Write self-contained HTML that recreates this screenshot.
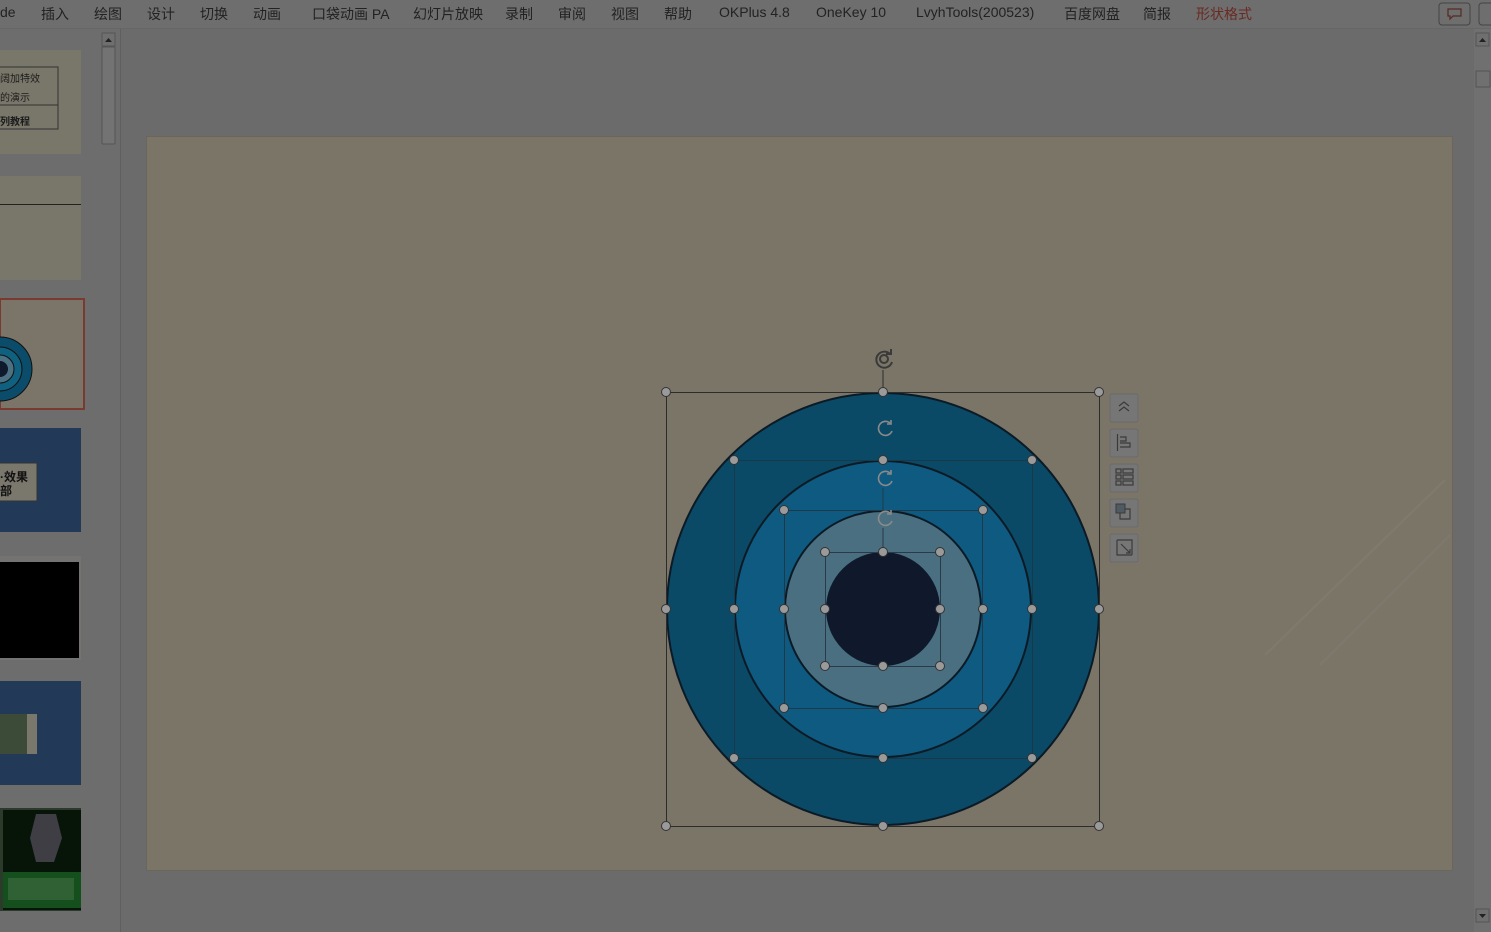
<!DOCTYPE html>
<html><head><meta charset="utf-8"><style>
html,body{margin:0;padding:0;width:1491px;height:932px;overflow:hidden;background:#6b6b6b;font-family:"Liberation Sans","Noto Sans CJK SC",sans-serif}
.menu{position:absolute;left:0;top:0;width:1491px;height:28px;background:#6e6e6e;border-bottom:1px solid #666}
.menu span{position:absolute;top:4px;font-size:14px;color:#222;white-space:nowrap}
</style></head><body>
<div class="menu">
<span style="left:0">de</span>
<span style="left:41px">插入</span>
<span style="left:94px">绘图</span>
<span style="left:147px">设计</span>
<span style="left:200px">切换</span>
<span style="left:253px">动画</span>
<span style="left:312px">口袋动画 PA</span>
<span style="left:413px">幻灯片放映</span>
<span style="left:505px">录制</span>
<span style="left:558px">审阅</span>
<span style="left:611px">视图</span>
<span style="left:664px">帮助</span>
<span style="left:719px">OKPlus 4.8</span>
<span style="left:816px">OneKey 10</span>
<span style="left:916px">LvyhTools(200523)</span>
<span style="left:1064px">百度网盘</span>
<span style="left:1143px">简报</span>
<span style="left:1196px;color:#6a2a22">形状格式</span>
</div>
<svg width="1491" height="932" style="position:absolute;left:0;top:0" xmlns="http://www.w3.org/2000/svg">
<rect x="1439" y="3" width="31" height="22" rx="3" fill="none" stroke="#444"/>
<path d="M1448 9h13v7h-8l-3 3v-3h-2z" fill="none" stroke="#552a22" stroke-width="1.2"/>
<rect x="1479" y="3" width="20" height="22" rx="3" fill="none" stroke="#444"/>
<rect x="0" y="29" width="120" height="903" fill="#6d6d6d"/>
<line x1="120.5" y1="29" x2="120.5" y2="932" stroke="#5f5f5f"/>
<rect x="102" y="33" width="13" height="13" fill="#6f6f6f" stroke="#555"/>
<path d="M105 42l3.5-4 3.5 4z" fill="#222"/>
<rect x="102" y="47" width="13" height="97" rx="1" fill="#737373" stroke="#555"/>
<rect x="0" y="50" width="81" height="104" fill="#79766a"/>
<rect x="-2" y="67" width="60" height="62" fill="none" stroke="#333"/>
<line x1="0" y1="105" x2="58" y2="105" stroke="#333"/>
<text x="0" y="82" font-size="10" fill="#1c1c1c">阔加特效</text>
<text x="0" y="101" font-size="10" fill="#1c1c1c">的演示</text>
<text x="0" y="125" font-size="10" font-weight="bold" fill="#1c1c1c">列教程</text>
<rect x="0" y="176" width="81" height="104" fill="#79766a"/>
<line x1="0" y1="204.5" x2="81" y2="204.5" stroke="#222"/>
<rect x="0" y="299" width="84" height="110" fill="#7a7568" stroke="#7a3a30" stroke-width="2"/>
<ellipse cx="0" cy="369" rx="32" ry="32" fill="#0b4c6a" stroke="#111"/>
<ellipse cx="0" cy="369" rx="22" ry="22" fill="#10607f" stroke="#111"/>
<ellipse cx="0" cy="369" rx="14" ry="14" fill="#4c7182" stroke="#111"/>
<ellipse cx="0" cy="369" rx="8" ry="8" fill="#0f1a2c"/>
<rect x="0" y="428" width="81" height="104" fill="#233958"/>
<rect x="-2" y="463" width="39" height="38" fill="#7a776d" stroke="#333"/>
<text x="0" y="481" font-size="12" font-weight="bold" fill="#111">·效果</text>
<text x="0" y="495" font-size="12" font-weight="bold" fill="#111">部</text>
<rect x="0" y="556" width="81" height="104" fill="#757372"/>
<rect x="0" y="562" width="79" height="96" fill="#000"/>
<rect x="0" y="681" width="81" height="104" fill="#233958"/>
<rect x="0" y="714" width="37" height="40" fill="#7a776d"/>
<rect x="0" y="714" width="27" height="40" fill="#3c4a38"/>
<rect x="0" y="808" width="81" height="103" fill="#2b3a2a"/>
<rect x="3" y="810" width="78" height="100" fill="#071509"/>
<path d="M36 814h20l6 24-8 24h-18l-6-24z" fill="#3e3e44"/>
<rect x="3" y="872" width="78" height="36" fill="#164f1e"/>
<rect x="8" y="878" width="66" height="22" fill="#3a6a3e" opacity=".7"/>
<rect x="1474" y="29" width="17" height="903" fill="#707070"/>
<rect x="1476" y="33" width="13" height="13" fill="#6f6f6f" stroke="#555"/>
<path d="M1479 42l3.5-4 3.5 4z" fill="#222"/>
<rect x="1476" y="71" width="14" height="16" fill="none" stroke="#555"/>
<rect x="1476" y="909" width="13" height="13" fill="#6f6f6f" stroke="#555"/>
<path d="M1479 914l3.5 4 3.5-4z" fill="#222"/>
<rect x="146.5" y="136.5" width="1306" height="734" fill="#7b7567" stroke="#6a665b"/>
<line x1="1265" y1="655" x2="1445" y2="480" stroke="#807a6e" stroke-width="2"/>
<line x1="1320" y1="665" x2="1450" y2="535" stroke="#7f796d" stroke-width="2"/>
<circle cx="883" cy="609" r="216" fill="#0b4a66" stroke="#0c1a26" stroke-width="2"/>
<circle cx="883" cy="609" r="148" fill="#0f5a80" stroke="#0c1a26" stroke-width="2"/>
<circle cx="883" cy="609" r="98" fill="#4a6f80" stroke="#0c1a26" stroke-width="2"/>
<circle cx="883" cy="609" r="57" fill="#0f192b"/>
<g fill="none" stroke="#2c2c2c" stroke-width="1">
<rect x="666.5" y="392.5" width="433" height="434"/>
<rect x="734.5" y="460.5" width="298" height="298" stroke="#163a4a"/>
<rect x="784.5" y="510.5" width="198" height="198" stroke="#1e3a4a"/>
<rect x="825.5" y="552.5" width="115" height="114" stroke="#2a3a48"/>
<line x1="883" y1="370" x2="883" y2="392"/>
<line x1="883" y1="488" x2="883" y2="510" stroke="#1e3a4a"/>
<line x1="883" y1="528" x2="883" y2="552" stroke="#2a3a48"/>
</g>
<g fill="#9a9a9a" stroke="#333" stroke-width="1">
<circle cx="666" cy="392" r="4.5"/><circle cx="883" cy="392" r="4.5"/><circle cx="1099" cy="392" r="4.5"/>
<circle cx="666" cy="609" r="4.5"/><circle cx="1099" cy="609" r="4.5"/>
<circle cx="666" cy="826" r="4.5"/><circle cx="883" cy="826" r="4.5"/><circle cx="1099" cy="826" r="4.5"/>
<circle cx="734" cy="460" r="4.5"/><circle cx="883" cy="460" r="4.5"/><circle cx="1032" cy="460" r="4.5"/>
<circle cx="734" cy="609" r="4.5"/><circle cx="1032" cy="609" r="4.5"/>
<circle cx="734" cy="758" r="4.5"/><circle cx="883" cy="758" r="4.5"/><circle cx="1032" cy="758" r="4.5"/>
<circle cx="784" cy="510" r="4.5"/><circle cx="983" cy="510" r="4.5"/>
<circle cx="784" cy="609" r="4.5"/><circle cx="983" cy="609" r="4.5"/>
<circle cx="784" cy="708" r="4.5"/><circle cx="883" cy="708" r="4.5"/><circle cx="983" cy="708" r="4.5"/>
<circle cx="825" cy="552" r="4.5"/><circle cx="883" cy="552" r="4.5"/><circle cx="940" cy="552" r="4.5"/>
<circle cx="825" cy="609" r="4.5"/><circle cx="940" cy="609" r="4.5"/>
<circle cx="825" cy="666" r="4.5"/><circle cx="883" cy="666" r="4.5"/><circle cx="940" cy="666" r="4.5"/>
</g>
<g fill="none" stroke="#3a3a3a" stroke-width="2">
<path d="M890 354a8 8 0 1 0 2 8"/><path d="M886 354h5v-5"/>
<circle cx="884" cy="359" r="4"/>
</g>
<g fill="none" stroke="#8a8a8a" stroke-width="1.6">
<path d="M890 423a7 7 0 1 0 2 8"/><path d="M887 424h4v-4"/>
<path d="M890 473a7 7 0 1 0 2 8"/><path d="M887 474h4v-4"/>
<path d="M890 513a7 7 0 1 0 2 8"/><path d="M887 514h4v-4"/>
</g>
<g fill="#767676" stroke="#6a6a6a">
<rect x="1110" y="394" width="28" height="28" rx="2"/>
<rect x="1110" y="429" width="28" height="28" rx="2"/>
<rect x="1110" y="464" width="28" height="28" rx="2"/>
<rect x="1110" y="499" width="28" height="28" rx="2"/>
<rect x="1110" y="534" width="28" height="28" rx="2"/>
</g>
<g fill="none" stroke="#3a3a3a" stroke-width="1.2">
<path d="M1119 406l5-4 5 4M1119 411l5-4 5 4"/>
<path d="M1117.5 434v17M1120 437h6v4h-6M1120 443h10v4h-10"/>
<rect x="1116" y="469" width="5" height="4"/><rect x="1116" y="475" width="5" height="4"/><rect x="1116" y="481" width="5" height="4"/>
<rect x="1123" y="469" width="10" height="4"/><rect x="1123" y="475" width="10" height="4"/><rect x="1123" y="481" width="10" height="4"/>
<path d="M1124 509h6v10h-10v-6"/>
<path d="M1117 540h15v15M1117 540v15h15M1121 544l9 9M1130 549v4h-4"/>
</g>
<rect x="1116" y="504" width="9" height="9" fill="#505a62" stroke="#3a3a3a"/>
</svg>
</body></html>
